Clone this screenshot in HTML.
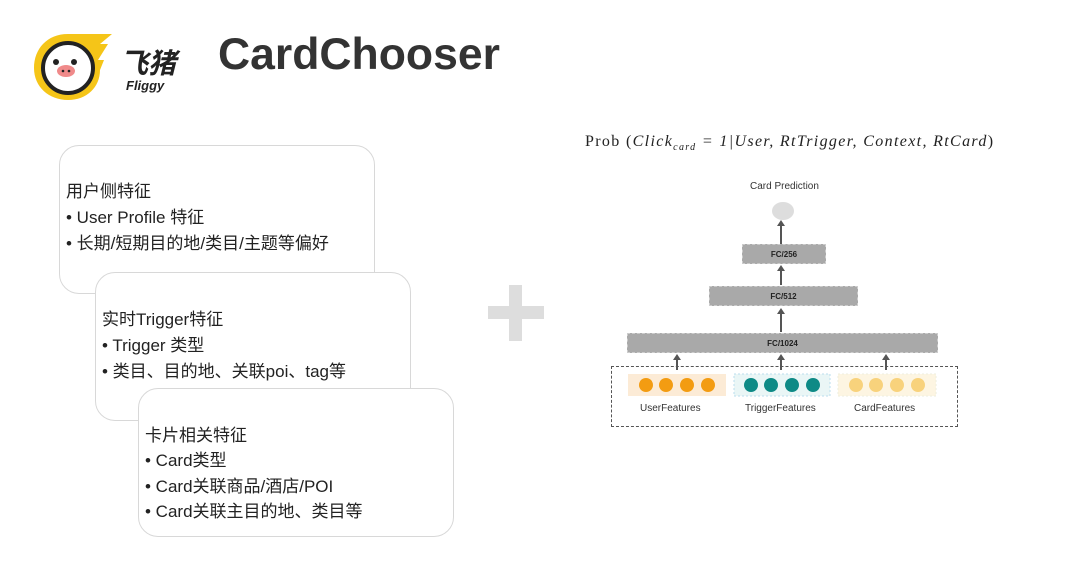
<!DOCTYPE html>
<html><head><meta charset="utf-8"><style>
body{margin:0;width:1080px;height:579px;background:#fff;position:relative;overflow:hidden;font-family:"Liberation Sans","Noto Sans CJK SC",sans-serif;}
.t{position:absolute;white-space:nowrap}
.card{position:absolute;width:316px;height:149px;border:1px solid #d8d8d8;border-radius:20px;background:#fff;box-sizing:border-box}
.card div{position:absolute;left:6px;font-size:17px;color:#222;white-space:nowrap}
.box{position:absolute;background:#a9a9a9;border:1px dashed #ccc;box-sizing:border-box;font-size:8px;color:#222;text-align:center;font-weight:bold}
</style></head><body>
<svg style="position:absolute;left:30px;top:30px" width="160" height="75" viewBox="0 0 160 75">
<path d="M38 4 C17 4 4 19 4 38 C4 57 19 70 38 70 C57 70 70 57 70 40 L74 30 L68 30 L78 14 L70 14 L82 4 Z" fill="#f5c518"/>
<circle cx="38" cy="38" r="25" fill="#fff" stroke="#222" stroke-width="4"/>
<circle cx="26" cy="32" r="3" fill="#222"/><circle cx="44" cy="32" r="3" fill="#222"/>
<ellipse cx="36" cy="41" rx="9" ry="6" fill="#f08a8a"/>
<circle cx="33" cy="41" r="1.3" fill="#222"/><circle cx="39" cy="41" r="1.3" fill="#222"/>
<text x="90" y="43" font-size="28" font-weight="bold" font-style="italic" fill="#222" font-family="Noto Sans CJK SC,sans-serif">飞猪</text>
<text x="96" y="60" font-size="13" font-weight="bold" font-style="italic" fill="#222" font-family="Liberation Sans,sans-serif">Fliggy</text>
</svg>
<div class="t" style="left:218px;top:30px;font-size:44.5px;font-weight:bold;color:#333">CardChooser</div>
<div class="t" style="left:585px;top:133px;font-size:16px;letter-spacing:1.35px;font-family:'Liberation Serif',serif;font-style:italic;color:#222"><span style="font-style:normal">Prob (</span>Click<sub style="font-size:10px">card</sub> = 1|User, RtTrigger, Context, RtCard<span style="font-style:normal">)</span></div>

<div class="card" style="left:59px;top:145px"><div style="top:31px">用户侧特征</div><div style="top:57px">• User Profile 特征</div><div style="top:83px">• 长期/短期目的地/类目/主题等偏好</div></div>
<div class="card" style="left:95px;top:272px"><div style="top:32px">实时Trigger特征</div><div style="top:58px">• Trigger 类型</div><div style="top:84px">• 类目、目的地、关联poi、tag等</div></div>
<div class="card" style="left:138px;top:388px"><div style="top:32px">卡片相关特征</div><div style="top:57px">• Card类型</div><div style="top:83px">• Card关联商品/酒店/POI</div><div style="top:108px">• Card关联主目的地、类目等</div></div>

<div style="position:absolute;left:488px;top:306px;width:56px;height:13px;background:#ddd"></div>
<div style="position:absolute;left:509px;top:285px;width:13px;height:56px;background:#ddd"></div>

<div class="t" style="left:750px;top:181px;font-size:10px;color:#333">Card Prediction</div>
<div style="position:absolute;left:772px;top:202px;width:22px;height:18px;border-radius:50%;background:#ddd"></div>
<svg style="position:absolute;left:600px;top:220px" width="380" height="150">
<g fill="#555"><path d="M781 0 l-4 6 h3 v18 h2 v-18 h3z" transform="translate(-600,0)"/>
<path d="M781 45 l-4 6 h3 v14 h2 v-14 h3z" transform="translate(-600,0)"/>
<path d="M781 88 l-4 6 h3 v18 h2 v-18 h3z" transform="translate(-600,0)"/>
<path d="M677 134 l-4 6 h3 v10 h2 v-10 h3z" transform="translate(-600,0)"/>
<path d="M781 134 l-4 6 h3 v10 h2 v-10 h3z" transform="translate(-600,0)"/>
<path d="M886 134 l-4 6 h3 v10 h2 v-10 h3z" transform="translate(-600,0)"/></g>
</svg>
<div class="box" style="left:742px;top:244px;width:84px;height:20px;line-height:19px">FC/256</div>
<div class="box" style="left:709px;top:286px;width:149px;height:20px;line-height:19px">FC/512</div>
<div class="box" style="left:627px;top:333px;width:311px;height:20px;line-height:19px">FC/1024</div>
<div style="position:absolute;left:611px;top:366px;width:347px;height:61px;border:1.5px dashed #555;box-sizing:border-box"></div>
<svg style="position:absolute;left:620px;top:372px" width="330" height="26">
<rect x="8" y="2" width="98" height="22" fill="#fcebd6"/>
<rect x="114" y="2" width="96" height="22" fill="#eaf6f6" stroke="#bde" stroke-dasharray="2 2"/>
<rect x="218" y="2" width="98" height="22" fill="#fdf5e2" stroke="#eed" stroke-dasharray="2 2"/>
<g fill="#f39c12"><circle cx="26" cy="13" r="7"/><circle cx="46" cy="13" r="7"/><circle cx="67" cy="13" r="7"/><circle cx="88" cy="13" r="7"/></g>
<g fill="#0e8a86"><circle cx="131" cy="13" r="7"/><circle cx="151" cy="13" r="7"/><circle cx="172" cy="13" r="7"/><circle cx="193" cy="13" r="7"/></g>
<g fill="#f8d27c"><circle cx="236" cy="13" r="7"/><circle cx="256" cy="13" r="7"/><circle cx="277" cy="13" r="7"/><circle cx="298" cy="13" r="7"/></g>
</svg>
<div class="t" style="left:640px;top:403px;font-size:10px;color:#333">UserFeatures</div>
<div class="t" style="left:745px;top:403px;font-size:10px;color:#333">TriggerFeatures</div>
<div class="t" style="left:854px;top:403px;font-size:10px;color:#333">CardFeatures</div>
</body></html>
